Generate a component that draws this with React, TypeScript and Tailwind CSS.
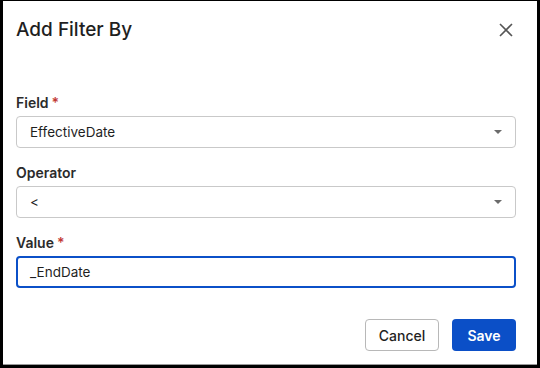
import React from "react";

const Caret = () => (
  <svg width="10" height="6" viewBox="0 0 10 6" className="absolute right-[12px] top-1/2 -translate-y-1/2">
    <path d="M1 1h8L5 5z" fill="#6b6b6b" />
  </svg>
);

const Label = ({ text, required }: { text: string; required?: boolean }) => (
  <div className="flex items-center gap-[3px] text-[14px] font-semibold text-[#2b2b2b] leading-[18px] mb-[4px]">
    {text}
    {required && <span className="text-[#c23934] text-[14px] leading-none">*</span>}
  </div>
);

export default function App() {
  return (
    <div
      className="w-[540px] h-[368px] bg-black pl-[3px] pr-[3px] pt-[1px] pb-[3px]"
      style={{ fontFamily: "Inter, 'Noto Sans', sans-serif" }}
    >
      <div className="h-full bg-white border-b border-[#9a9a9a] flex flex-col pl-[13px] pr-[21px]">
        <div className="flex items-center justify-between h-[57px] pt-[1px]">
          <h2 className="text-[19px] font-medium text-[#1f1f1f]">Add Filter By</h2>
          <svg width="14" height="14" viewBox="0 0 14 14" className="mr-[3px]">
            <path d="M1 1l12 12M13 1L1 13" stroke="#555" strokeWidth="1.6" />
          </svg>
        </div>

        <div className="mt-[36px]">
          <Label text="Field" required />
          <div className="relative h-[32px] border border-[#c9c9c9] rounded-[4px] flex items-center pl-[13px] text-[13.5px] text-[#1f1f1f]">
            EffectiveDate
            <Caret />
          </div>
        </div>

        <div className="mt-[16px]">
          <Label text="Operator" />
          <div className="relative h-[32px] border border-[#c9c9c9] rounded-[4px] flex items-center pl-[13px] text-[13.5px] text-[#1f1f1f]">
            &lt;
            <Caret />
          </div>
        </div>

        <div className="mt-[16px]">
          <Label text="Value" required />
          <div className="h-[32px] border-2 border-[#0b50c8] rounded-[4px] flex items-center pl-[12px] text-[13.5px] text-[#1f1f1f]">
            _EndDate
          </div>
        </div>

        <div className="flex justify-end gap-[13px] mt-[31px]">
          <button className="w-[74px] h-[32px] border border-[#b8b8b8] rounded-[4px] text-[14px] font-medium text-[#1f1f1f] bg-white">
            Cancel
          </button>
          <button className="w-[64px] h-[32px] rounded-[4px] text-[14px] font-semibold text-white bg-[#0b4fc7]">
            Save
          </button>
        </div>
      </div>
    </div>
  );
}
